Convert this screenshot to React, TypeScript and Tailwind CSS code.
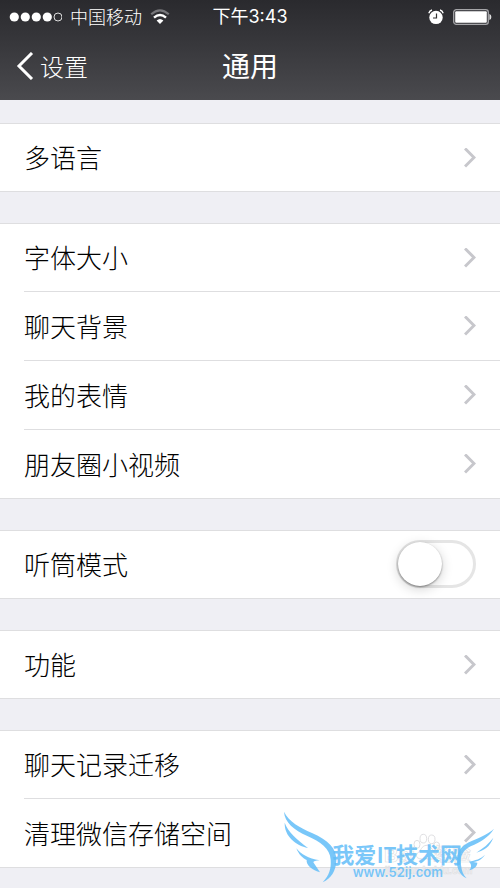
import React from "react";

type RowData = { label: string; kind?: "link" | "switch" };

const groups: RowData[][] = [
  [{ label: "多语言" }],
  [{ label: "字体大小" }, { label: "聊天背景" }, { label: "我的表情" }, { label: "朋友圈小视频" }],
  [{ label: "听筒模式", kind: "switch" }],
  [{ label: "功能" }],
  [{ label: "聊天记录迁移" }, { label: "清理微信存储空间" }],
];

function Chevron() {
  return (
    <svg className="h-5 w-3 shrink-0" viewBox="0 0 12 20" fill="none" stroke="#c7c7cc" strokeWidth="3" aria-hidden="true">
      <path d="M1 0.5 L10 9.5 L1 18.5" />
    </svg>
  );
}

function Row({ row, first, last }: { row: RowData; first: boolean; last: boolean }) {
  const height = first ? "h-[68px]" : "h-[69px]";
  const line = last ? "" : "border-b border-[#dedee0]";
  const edge = last ? "border-b border-[#dedee0]" : "";
  if (row.kind === "switch") {
    return (
      <li className={`${height} ${edge} pl-6`}>
        <label className={`flex h-full items-center justify-between pr-6 ${line}`}>
          <span className="pt-1">{row.label}</span>
          <span className="relative mb-0.5 h-12 w-20">
            <input type="checkbox" role="switch" className="peer block size-full appearance-none rounded-full border-[3px] border-[#e5e5e5] bg-white checked:border-[#4cd964] checked:bg-[#4cd964]" />
            <span className="pointer-events-none absolute top-0.5 left-0.5 size-11 rounded-full bg-white shadow-[0_3px_12px_rgba(0,0,0,0.18),0_1px_2px_rgba(0,0,0,0.4)] peer-checked:left-8" />
          </span>
        </label>
      </li>
    );
  }
  return (
    <li className={`${height} ${edge} pl-6`}>
      <button type="button" className={`flex size-full items-center justify-between pr-6 text-left ${line}`}>
        <span className="pt-1">{row.label}</span>
        <Chevron />
      </button>
    </li>
  );
}

function StatusBar() {
  return (
    <div className="grid h-8 grid-cols-[1fr_auto_1fr] items-center px-2 text-lg leading-8">
      <div className="flex items-center gap-2">
        <svg className="h-3 w-[54px]" viewBox="0 0 54 12" aria-hidden="true">
          <g fill="#fff">
            <circle cx="6.3" cy="6" r="4.6" />
            <circle cx="17.3" cy="6" r="4.6" />
            <circle cx="28.3" cy="6" r="4.6" />
            <circle cx="39.3" cy="6" r="4.6" />
          </g>
          <circle cx="50" cy="6" r="4" fill="none" stroke="#ddd" strokeWidth="1" />
        </svg>
        <span className="pt-0.5 font-light">中国移动</span>
        <svg className="h-4 w-5" viewBox="0 0 20 16" fill="none" aria-hidden="true">
          <path d="M1.2 5.3 Q10 -2.6 18.8 5.3" stroke="#77777b" strokeWidth="2.2" />
          <path d="M4 8.7 Q10 3.3 16 8.7" stroke="#fff" strokeWidth="2.4" />
          <path d="M6.6 11.5 Q10 8.4 13.4 11.5 L10 15 Z" fill="#fff" />
        </svg>
      </div>
      <span className="font-['Inter','Noto_Sans_CJK_SC',sans-serif]">下午3:43</span>
      <div className="flex items-center justify-end gap-2">
        <svg className="size-4" viewBox="0 0 16 16" aria-hidden="true">
          <circle cx="8" cy="8.4" r="6.7" fill="#fff" />
          <path d="M0.8 4.2 Q1.6 1.6 4 1 M15.2 4.2 Q14.4 1.6 12 1" fill="none" stroke="#fff" strokeWidth="1.3" />
          <path d="M8.5 4.5 V9 H5" fill="none" stroke="#333" strokeWidth="1.2" />
        </svg>
        <svg className="h-4 w-10" viewBox="0 0 40 16" aria-hidden="true">
          <rect x="1.7" y="0.7" width="34.6" height="14.6" rx="2.6" fill="none" stroke="#a5a5a8" strokeWidth="1.3" />
          <rect x="3.2" y="2.2" width="31.6" height="11.6" rx="1" fill="#fff" />
          <path d="M37.4 5 Q39.4 5.4 39.4 8 Q39.4 10.6 37.4 11 Z" fill="#ddd" />
        </svg>
      </div>
    </div>
  );
}

function Watermark() {
  return (
    <svg className="pointer-events-none absolute right-0 bottom-0 h-[98px] w-[230px]" viewBox="0 0 690 294" aria-hidden="true">
      <g fill="#fff" fillOpacity="0.6" stroke="#dfdfe2" strokeWidth="3">
        <ellipse cx="441" cy="163" rx="9" ry="12" />
        <ellipse cx="460" cy="146" rx="10" ry="13" />
        <ellipse cx="485" cy="148" rx="10" ry="13" />
        <ellipse cx="500" cy="168" rx="9" ry="12" />
        <path d="M468 166 C482 164 486 182 498 190 C506 204 490 210 468 206 C446 210 434 202 442 190 C454 182 454 168 468 166 Z" />
      </g>
      <g fill="#fff" fillOpacity="0.5" stroke="#dfdfe2" strokeWidth="2" fontFamily="'Liberation Sans','Noto Sans CJK SC',sans-serif" fontWeight="700">
        <text x="342" y="216" fontSize="60">Bai</text>
        <text x="490" y="214" fontSize="56">经验</text>
        <text x="344" y="252" fontSize="30">jingyan.baidu.com</text>
      </g>
      <g fill="#62bdf8" fillOpacity="0.85">
        <path d="M42 65 C58 96 88 112 126 129 C176 152 199 174 199 211 C198 244 183 266 158 277 C177 256 184 238 182 209 C180 174 151 156 112 138 C72 119 44 98 42 65 Z" />
        <path d="M44 98 C55 128 78 145 114 174 C77 166 43 139 44 98 Z" />
        <path d="M79 175 C94 193 114 206 149 211 C136 212 131 214 130 217 L150 247 C124 239 108 224 110 210 C98 205 86 193 79 175 Z" />
        <path d="M672 116 C655 143 632 155 602 169 C575 183 570 202 573 225 C575 243 580 255 590 265 C568 255 559 234 561 207 C563 180 577 165 605 153 C636 140 657 130 672 116 Z" />
        <path d="M670 143 C659 172 641 181 619 188 C640 174 656 162 670 143 Z" />
        <path d="M645 194 C635 209 625 213 610 216 L622 218 C622 229 612 237 598 241 C607 230 603 219 596 215 C616 211 632 207 645 194 Z" />
        <text x="187" y="220" fontSize="66" fontWeight="700" fontFamily="'Noto Sans CJK SC',sans-serif">我爱</text>
        <text x="320" y="220" fontSize="62" fontWeight="700" fontFamily="'Noto Sans CJK SC',sans-serif">IT</text>
        <text x="378" y="220" fontSize="66" fontWeight="700" fontFamily="'Noto Sans CJK SC',sans-serif">技术网</text>
        <text x="248" y="260" fontSize="39" fontWeight="600" fontFamily="Inter,sans-serif">www.52ij.com</text>
      </g>
    </svg>
  );
}

export default function App() {
  return (
    <div className="relative min-h-screen bg-[#efeff4] font-['Liberation_Sans','Noto_Sans_CJK_SC',sans-serif] text-black">
      <header className="h-[100px] bg-linear-to-b from-[#2a2a2e] to-[#4a4a4e] text-white">
        <StatusBar />
        <nav className="grid h-[68px] grid-cols-[1fr_auto_1fr] items-center px-4">
          <button type="button" className="flex items-center gap-1.5 text-2xl font-light">
            <svg className="h-7 w-[18px]" viewBox="0 0 18 28" fill="none" stroke="#fff" strokeWidth="3" aria-hidden="true">
              <path d="M16 1 L3 14 L16 27" />
            </svg>
            <span className="pt-1">设置</span>
          </button>
          <h1 className="pt-1 text-[28px] font-normal">通用</h1>
        </nav>
      </header>
      <main className="flex flex-col gap-[31px] pt-[23px] text-[26px] font-light">
        {groups.map((rows) => (
          <ul key={rows[0].label} className="border-t border-[#dedee0] bg-white">
            {rows.map((row, i) => (
              <React.Fragment key={row.label}>
                <Row row={row} first={i === 0} last={i === rows.length - 1} />
              </React.Fragment>
            ))}
          </ul>
        ))}
      </main>
      <Watermark />
    </div>
  );
}
